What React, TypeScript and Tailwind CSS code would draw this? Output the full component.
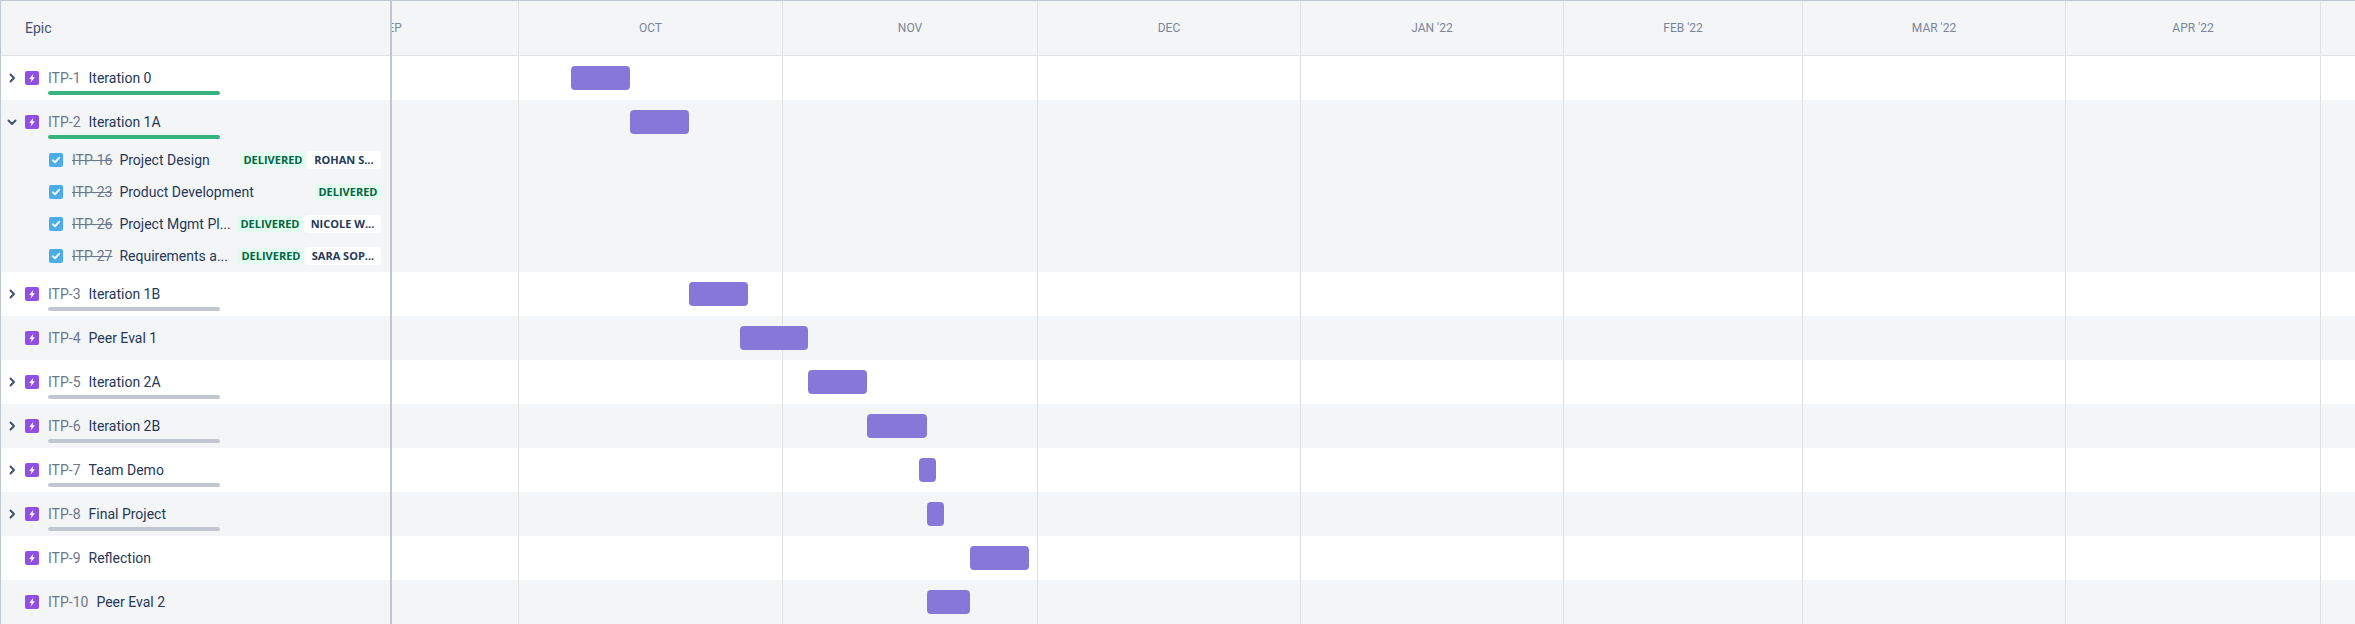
import React from "react";

interface Subtask {
  id: string;
  title: string;
  assignee?: string;
  chipClass?: string;
}

interface Epic {
  id: string;
  title: string;
  barClass: string;
  hasChildren: boolean;
  progress?: "done" | "todo";
  expanded?: boolean;
  subtasks?: Subtask[];
}

const EPICS: Epic[] = [
  { id: "ITP-1", title: "Iteration 0", barClass: "ml-[179px] w-[59px]", hasChildren: true, progress: "done" },
  {
    id: "ITP-2",
    title: "Iteration 1A",
    barClass: "ml-[238px] w-[59px]",
    hasChildren: true,
    progress: "done",
    expanded: true,
    subtasks: [
      { id: "ITP-16", title: "Project Design", assignee: "ROHAN S...", chipClass: "w-[74px]" },
      { id: "ITP-23", title: "Product Development" },
      { id: "ITP-26", title: "Project Mgmt Pl...", assignee: "NICOLE W...", chipClass: "w-[77px]" },
      { id: "ITP-27", title: "Requirements a...", assignee: "SARA SOP...", chipClass: "w-[76px]" },
    ],
  },
  { id: "ITP-3", title: "Iteration 1B", barClass: "ml-[297px] w-[59px]", hasChildren: true, progress: "todo" },
  { id: "ITP-4", title: "Peer Eval 1", barClass: "ml-[348px] w-[68px]", hasChildren: false },
  { id: "ITP-5", title: "Iteration 2A", barClass: "ml-[416px] w-[59px]", hasChildren: true, progress: "todo" },
  { id: "ITP-6", title: "Iteration 2B", barClass: "ml-[475px] w-[60px]", hasChildren: true, progress: "todo" },
  { id: "ITP-7", title: "Team Demo", barClass: "ml-[527px] w-[17px]", hasChildren: true, progress: "todo" },
  { id: "ITP-8", title: "Final Project", barClass: "ml-[535px] w-[17px]", hasChildren: true, progress: "todo" },
  { id: "ITP-9", title: "Reflection", barClass: "ml-[578px] w-[59px]", hasChildren: false },
  { id: "ITP-10", title: "Peer Eval 2", barClass: "ml-[535px] w-[43px]", hasChildren: false },
];

const MONTHS = [
  { label: "SEP", className: "w-[255px] -ml-[128px]" },
  { label: "OCT", className: "w-[264px]" },
  { label: "NOV", className: "w-[255px]" },
  { label: "DEC", className: "w-[263px]" },
  { label: "JAN '22", className: "w-[263px]" },
  { label: "FEB '22", className: "w-[239px]" },
  { label: "MAR '22", className: "w-[263px]" },
  { label: "APR '22", className: "w-[255px]" },
  { label: "", className: "w-[263px]" },
];

const rowBg = (index: number) => (index % 2 === 0 ? "bg-white" : "bg-[#f4f5f7]");

const EpicIcon: React.FC = () => (
  <svg width="14" height="14" viewBox="0 0 14 14" className="shrink-0">
    <rect width="14" height="14" rx="2" fill="#904ee2" />
    <path d="M8.4 2.8 4.2 8h2.3l-.9 3.8L9.9 6.2H7.5z" fill="#fff" />
  </svg>
);

const CheckIcon: React.FC = () => (
  <svg width="14" height="14" viewBox="0 0 14 14" className="shrink-0">
    <rect width="14" height="14" rx="2" fill="#4bade8" />
    <path d="M3.8 7.2 6 9.4l4.2-4.8" fill="none" stroke="#fff" strokeWidth="1.8" strokeLinecap="round" strokeLinejoin="round" />
  </svg>
);

const Chevron: React.FC<{ expanded?: boolean }> = ({ expanded }) => (
  <svg width="16" height="16" viewBox="0 0 16 16" className="shrink-0">
    <path
      d={expanded ? "M4.5 6.5 8 10l3.5-3.5" : "M6.5 4.5 10 8l-3.5 3.5"}
      fill="none"
      stroke="#42526e"
      strokeWidth="2"
      strokeLinecap="round"
      strokeLinejoin="round"
    />
  </svg>
);

const EpicRow: React.FC<{ epic: Epic; index: number }> = ({ epic, index }) => (
  <div className={`relative h-[44px] flex items-center pl-[3px] ${rowBg(index)}`}>
    <div className="w-[16px] mr-[5px] flex justify-center shrink-0">{epic.hasChildren && <Chevron expanded={epic.expanded} />}</div>
    <EpicIcon />
    <span className="ml-[9px] text-[#6b778c]">{epic.id}</span>
    <span className="ml-[8px] text-[#253858]">{epic.title}</span>
    {epic.progress && (
      <div
        className={`absolute left-[47px] top-[35px] w-[172px] h-[4px] rounded-[2px] ${
          epic.progress === "done" ? "bg-[#36b37e]" : "bg-[#c1c7d0]"
        }`}
      />
    )}
  </div>
);

const SubtaskRow: React.FC<{ task: Subtask }> = ({ task }) => (
  <div className="h-[32px] flex items-center pl-[48px] pr-[9px] bg-[#f4f5f7]">
    <CheckIcon />
    <span className="ml-[9px] text-[#6b778c] line-through">{task.id}</span>
    <span className="ml-[7px] flex-1 min-w-0 truncate text-[#253858]">{task.title}</span>
    <span className="shrink-0 h-[16px] px-[3.5px] flex items-center rounded-[3px] bg-[#e3fcef] text-[#006644] text-[11px] font-bold font-['Open_Sans',sans-serif]">
      DELIVERED
    </span>
    {task.assignee && (
      <span
        className={`shrink-0 ml-[1px] h-[18px] flex items-center justify-center rounded-[3px] bg-white text-[#253858] text-[11px] font-bold font-['Open_Sans',sans-serif] ${task.chipClass}`}
      >
        {task.assignee}
      </span>
    )}
  </div>
);

export default function App() {
  return (
    <div className="w-[2355px] h-[624px] overflow-hidden flex bg-white text-[14px] font-['Roboto',sans-serif] border-t border-[#c1c7d0]">
      <div className="w-[392px] shrink-0 border-l border-r-2 border-[#c1c7d0] relative z-20">
        <div className="h-[55px] flex items-center pl-[24px] bg-[#f4f5f7] border-b border-[#dfe1e6] text-[#42526e]">Epic</div>
        {EPICS.map((epic, index) => (
          <React.Fragment key={epic.id}>
            <EpicRow epic={epic} index={index} />
            {epic.subtasks?.map((task) => <SubtaskRow key={task.id} task={task} />)}
          </React.Fragment>
        ))}
      </div>

      <div className="flex-1 min-w-0 overflow-hidden">
        <div className="h-[55px] flex bg-[#f4f5f7] border-b border-[#dfe1e6]">
          {MONTHS.map((month) => (
            <div
              key={month.label || "next"}
              className={`shrink-0 flex items-center justify-center border-r border-[#dfe1e6] text-[12px] text-[#7a869a] ${month.className}`}
            >
              {month.label}
            </div>
          ))}
        </div>
        <div className="relative">
          {EPICS.map((epic, index) => (
            <React.Fragment key={epic.id}>
              <div className={`h-[44px] flex items-center ${rowBg(index)}`}>
                <div className={`relative z-10 h-[24px] rounded-[4px] bg-[#8777d9] ${epic.barClass}`} />
              </div>
              {epic.subtasks && <div className="h-[128px] bg-[#f4f5f7]" />}
            </React.Fragment>
          ))}
          <div className="absolute inset-0 flex">
            {MONTHS.map((month) => (
              <div key={month.label || "next"} className={`shrink-0 border-r border-[#dfe1e6] ${month.className}`} />
            ))}
          </div>
        </div>
      </div>
    </div>
  );
}
